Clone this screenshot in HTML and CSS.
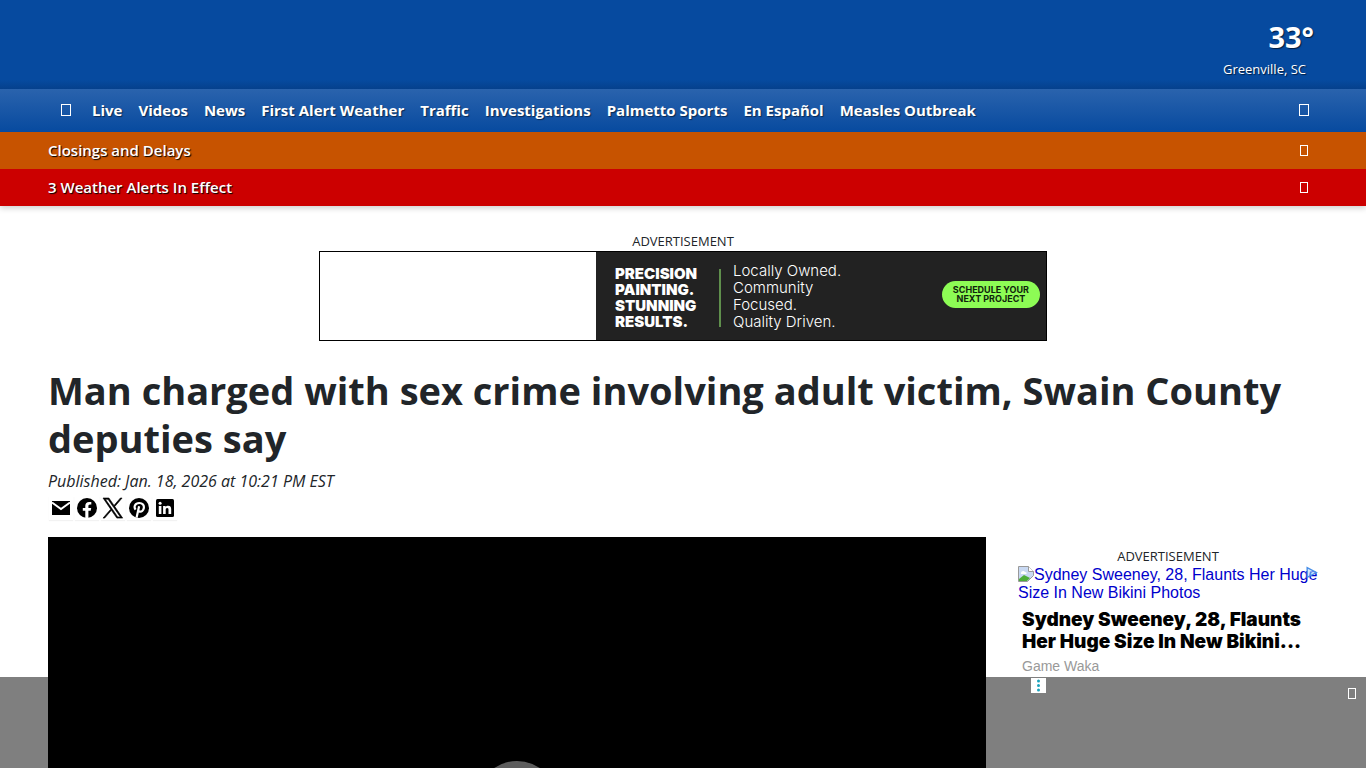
FILE: index.html
```html
<!DOCTYPE html>
<html lang="en">
<head>
<meta charset="utf-8">
<meta name="viewport" content="width=device-width, initial-scale=1">
<title>Man charged with sex crime involving adult victim, Swain County deputies say</title>
<link rel="stylesheet" href="styles.css">
</head>
<body>
<header class="site-header">
  <div class="masthead">
    <a class="weather" href="#">
      <span class="weather-temp">33°</span>
      <span class="weather-place">Greenville, SC</span>
    </a>
  </div>
  <nav class="main-nav" aria-label="Main">
    <button class="icon-button menu-button" type="button" aria-label="Menu"><span class="glyph"></span></button>
    <a href="#">Live</a>
    <a href="#">Videos</a>
    <a href="#">News</a>
    <a href="#">First Alert Weather</a>
    <a href="#">Traffic</a>
    <a href="#">Investigations</a>
    <a href="#">Palmetto Sports</a>
    <a href="#">En Español</a>
    <a href="#">Measles Outbreak</a>
    <button class="icon-button search-button" type="button" aria-label="Search"><span class="glyph"></span></button>
  </nav>
  <div class="alert alert-closings">
    <a href="#">Closings and Delays</a>
    <button class="icon-button" type="button" aria-label="Show closings"><span class="glyph glyph-small"></span></button>
  </div>
  <div class="alert alert-weather">
    <a href="#">3 Weather Alerts In Effect</a>
    <button class="icon-button" type="button" aria-label="Show weather alerts"><span class="glyph glyph-small"></span></button>
  </div>
</header>

<main class="page">
  <section class="leaderboard">
    <p class="ad-label">ADVERTISEMENT</p>
    <a class="banner" href="#">
      <span class="banner-logo"></span>
      <span class="banner-body">
        <strong class="banner-title">PRECISION<br>PAINTING.<br>STUNNING<br>RESULTS.</strong>
        <span class="banner-rule"></span>
        <span class="banner-copy">Locally Owned.<br>Community<br>Focused.<br>Quality Driven.</span>
        <span class="banner-cta">SCHEDULE YOUR<br>NEXT PROJECT</span>
      </span>
    </a>
  </section>

  <h1 class="headline">Man charged with sex crime involving adult victim, Swain County deputies say</h1>
  <p class="published">Published: Jan. 18, 2026 at 10:21 PM EST</p>
  <div class="share">
    <a href="#" aria-label="Email"><svg viewBox="0 0 24 24"><path d="M3 5h18v14H3z"/><path d="M3 6.500l9 6.500 9-6.500" fill="none" stroke="#fff" stroke-width="2"/></svg></a>
    <a href="#" aria-label="Facebook"><svg viewBox="0 0 24 24"><circle cx="12" cy="12" r="10"/><path fill="#fff" d="M10.300 22v-7.200H7.800V12h2.500V9.800c0-2.500 1.500-3.900 3.800-3.900 1.100 0 2.200.2 2.200.2v2.400H15c-1.200 0-1.600.8-1.600 1.500v2h2.800l-.5 2.800h-2.300V22z"/></svg></a>
    <a href="#" aria-label="X"><svg viewBox="0 0 24 24"><path d="M13.800 10.500 21.100 2h-1.700L13 9.400 7.900 2H2l7.700 11.200L2 22.100h1.700l6.700-7.800 5.400 7.800h5.900zM11.400 13.200l-.8-1.100L4.400 3.300H7l5 7.200.8 1.100 6.500 9.300h-2.600z" stroke="#000" stroke-width=".6"/></svg></a>
    <a href="#" aria-label="Pinterest"><svg viewBox="0 0 24 24"><circle cx="12" cy="12" r="10"/><path d="M8.600 13.600C6.400 10.700 8.100 7 12.200 7c3.500 0 5.100 2.300 4.600 5-.4 2.700-2.400 4.100-4.100 3.600-1.200-.3-1.500-1.200-1.200-2.300M12.100 10.300L9.600 21.500" fill="none" stroke="#fff" stroke-width="2.200"/></svg></a>
    <a href="#" aria-label="LinkedIn"><svg viewBox="0 0 24 24"><rect x="3" y="3" width="18" height="18" rx="1.500"/><path fill="#fff" d="M5.800 10h2.600v8H5.800zM10.100 10h2.500v1.100c.5-.8 1.300-1.300 2.600-1.300 2.400 0 3 1.600 3 3.800V18h-2.700v-3.900c0-1.100-.1-2.100-1.300-2.100s-1.500.9-1.500 2.100V18h-2.600z"/><circle cx="7.100" cy="7.200" r="1.500" fill="#fff"/></svg></a>
  </div>

  <div class="columns">
    <article class="video">
      <button class="play" type="button" aria-label="Play video"><svg viewBox="0 0 24 24"><path d="M8 5v14l11-7z"/></svg></button>
    </article>
    <aside class="sidebar">
      <p class="ad-label">ADVERTISEMENT</p>
      <div class="native-ad">
        <a class="native-image" href="#"><svg class="broken" viewBox="0 0 16 16" aria-hidden="true"><path d="M.5.500h10l5 5v4l-6 6h-9z" fill="#c9d9f3" stroke="#999"/><path d="M10.500.500v5h5" fill="#fff" stroke="#999"/><path d="M3 7c0-2 3-3 4-1 2 0 2 2 1 2H3z" fill="#fff"/><path d="M1 15v-2l5-4 4 2 2 1-3 3z" fill="#4eae3a"/></svg>Sydney Sweeney, 28, Flaunts Her Huge Size In New Bikini Photos</a>
        <a class="native-title" href="#">Sydney Sweeney, 28, Flaunts Her Huge Size In New Bikini...</a>
        <span class="native-source">Game Waka</span>
        <a class="ad-choices" href="#" aria-label="Ad choices"><svg viewBox="0 0 12 12"><path d="M2 1.500 10.500 6 2 10.500z" fill="#b9dcfa" fill-opacity=".6" stroke="#4a90e8" stroke-width="1.300"/><path d="M5 5v3" stroke="#4a90e8"/></svg></a>
      </div>
    </aside>
  </div>
</main>

<div class="sticky-ad">
  <button class="ad-options" type="button" aria-label="Ad options"><svg viewBox="0 0 15 15"><g fill="#1aa3bd"><circle cx="7.500" cy="3" r="1.500"/><circle cx="7.500" cy="7.500" r="1.500"/><circle cx="7.500" cy="12" r="1.500"/></g></svg></button>
  <button class="icon-button" type="button" aria-label="Close ad"><span class="glyph glyph-small"></span></button>
</div>
</body>
</html>
```
FILE: styles.css
```css
* { box-sizing: border-box; }

body {
  margin: 0;
  background: #fff;
  color: #212529;
  font-family: "Open Sans", "Noto Sans", sans-serif;
  font-size: 15px;
}

a { color: inherit; text-decoration: none; }
p { margin: 0; }
button { border: 0; padding: 0; background: none; font: inherit; cursor: pointer; }
svg { display: block; }

.site-header {
  color: #fff;
  box-shadow: 0 2px 6px rgba(0, 0, 0, .2);
}

.masthead {
  display: flex;
  justify-content: flex-end;
  height: 89px;
  padding: 19px 52px 0 48px;
  background: linear-gradient(#064a9f 80px, #05408c);
  text-shadow: 1px 1px 1px rgba(0, 0, 0, .6);
}

.weather { display: flex; flex-direction: column; align-items: flex-end; }
.weather-temp { font-size: 29px; line-height: 36px; font-weight: 700; }
.weather-place { padding-right: 8px; font-size: 13px; line-height: 28px; }

.main-nav {
  display: flex;
  align-items: center;
  gap: 16px;
  height: 43px;
  padding: 0 57px 2px 61px;
  background: linear-gradient(#2a63ad, #074a9f);
  font-weight: 700;
  text-shadow: 1px 1px 1px rgba(0, 0, 0, .5);
  white-space: nowrap;
}

.icon-button { display: flex; color: #fff; }
.menu-button { margin-right: 5px; }
.search-button { margin-left: auto; }
.glyph { width: 10px; height: 12px; border: 1px solid currentColor; }
.glyph-small { width: 8px; height: 11px; }

.alert {
  display: flex;
  align-items: center;
  justify-content: space-between;
  height: 37px;
  padding: 0 58px 1px 48px;
  font-weight: 600;
  text-shadow: 1px 1px 1px #000;
}
.alert-closings { background: #c75300; }
.alert-weather { background: #c00; }

.page { padding: 25px 48px 0; }

.leaderboard { display: flex; flex-direction: column; align-items: center; }
.ad-label { font-size: 13px; line-height: 20px; text-align: center; }

.banner {
  display: flex;
  width: 728px;
  max-width: 100%;
  height: 90px;
  border: 1px solid #000;
  color: #fff;
}
.banner-logo { flex: 0 0 276px; }
.banner-body {
  flex: 1;
  display: flex;
  align-items: center;
  padding: 3px 6px 0 19px;
  background: #222;
}
.banner-title { width: 104px; font: 900 15px/16px Inter, sans-serif; }
.banner-rule { width: 2px; height: 58px; background: #5f8f4c; }
.banner-copy { padding: 0 0 4px 12px; font: 300 15px/17px Inter, sans-serif; }
.banner-cta {
  margin: 0 0 6px auto;
  padding: 4px 11px 5px;
  border-radius: 14px;
  background: #8dfc55;
  color: #10240c;
  font: 700 9px/9px Inter, sans-serif;
  text-align: center;
  white-space: nowrap;
}

.headline {
  margin: 25px 0 0;
  font-size: 38px;
  line-height: 48px;
  font-weight: 700;
}
.published { margin-top: 7px; font-size: 16px; line-height: 24px; font-style: italic; }

.share { display: flex; gap: 2px; padding: 3px 1px 0; }
.share a { width: 24px; height: 24px; box-shadow: 0 1px 1px rgba(0, 0, 0, .05); }

.columns {
  display: grid;
  grid-template-columns: minmax(0, 1fr) 300px;
  gap: 32px;
  align-items: start;
  margin-top: 17px;
}
.video {
  display: grid;
  place-items: center;
  aspect-ratio: 16 / 9;
  background: #000;
}
.play {
  display: grid;
  place-items: center;
  width: 80px;
  height: 80px;
  border-radius: 50%;
  background: #bbb;
}
.play svg { width: 48px; fill: #fff; }

.sidebar { padding-top: 9px; }
.native-ad {
  position: relative;
  display: flex;
  flex-direction: column;
  font-family: "Liberation Sans", Arial, sans-serif;
}
.native-image { color: #00c; font-size: 16px; line-height: 18px; }
.broken { display: inline-block; width: 16px; height: 16px; vertical-align: top; }
.native-title {
  padding: 7px 0 0 4px;
  color: #000;
  font-family: Inter, sans-serif;
  font-size: 19px;
  line-height: 22px;
  font-weight: 900;
}
.native-source { padding: 5px 4px; color: #999; font-size: 14px; line-height: 16px; }
.ad-choices { position: absolute; top: 0; right: 0; width: 13px; height: 13px; }

.sticky-ad {
  position: fixed;
  right: 0;
  bottom: 0;
  left: 0;
  display: flex;
  justify-content: flex-end;
  align-items: flex-start;
  height: 91px;
  padding: 1px 10px 0;
  background: rgba(0, 0, 0, .5);
}
.ad-options { width: 15px; height: 15px; margin-right: 302px; background: #fff; }
.sticky-ad .icon-button { margin-top: 10px; }
```
